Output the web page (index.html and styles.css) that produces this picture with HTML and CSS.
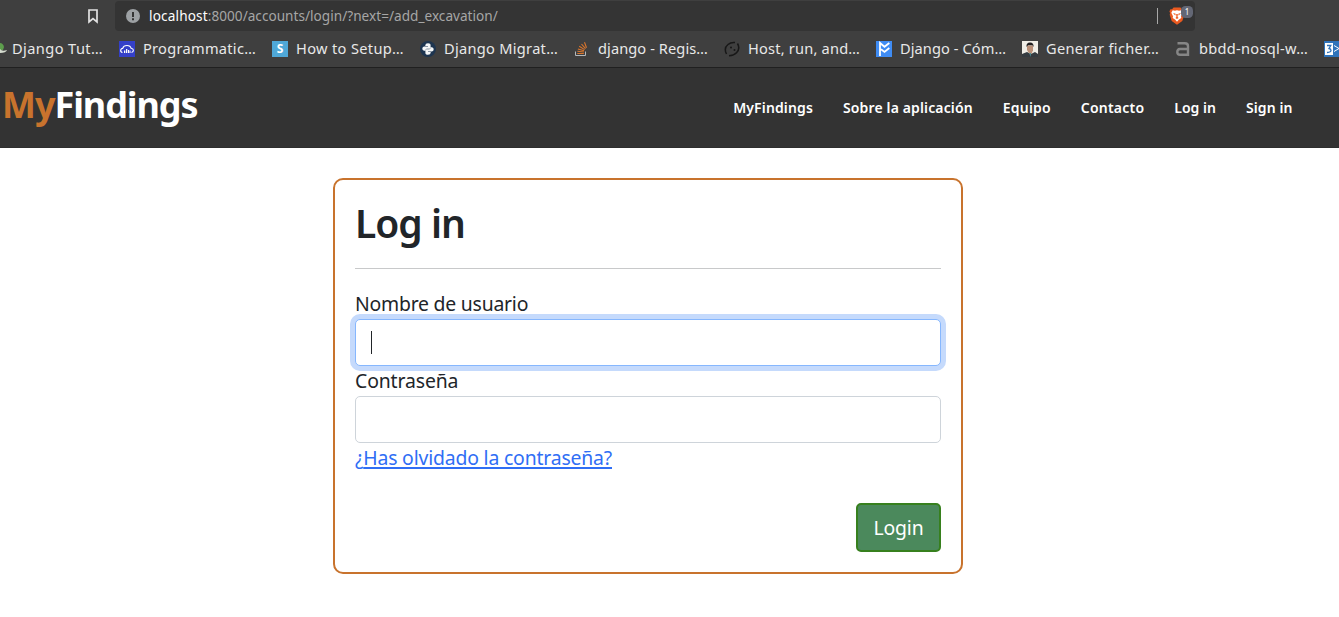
FILE: index.html
```
<!DOCTYPE html>
<html lang="es">
<head>
<meta charset="utf-8">
<title>MyFindings</title>
<link rel="stylesheet" href="styles.css">
</head>
<body>
<div class="chrome">
  <div class="toolbar">
    <svg class="save" width="12" height="16" viewBox="0 0 12 16"><path d="M2 2h8v12l-4-3.300L2 14z" fill="none" stroke="#e2e2e2" stroke-width="1.700"/></svg>
    <div class="address">
      <svg width="14" height="14" viewBox="0 0 14 14"><circle cx="7" cy="7" r="7" fill="#9da1a4"/><path d="M6 3h2v5H6zM6 9.300h2v2H6z" fill="#343434"/></svg>
      <div class="url"><span class="host">localhost</span><span class="path">:8000/accounts/login/?next=/add_excavation/</span></div>
      <span class="divider"></span>
      <div class="shield">
        <svg width="16" height="18" viewBox="0 0 16 18"><path d="M4.500.5h7l1.400 1.700 1.700.1 1 2.200-.7 1.500.4 1.700-2 6.300L8 17.700 2.700 14l-2-6.300L1.100 6 .4 4.500l1-2.200 1.700-.1z" fill="#ea5a20"/><path d="M3.700 3.200l2.300.5L8 3.200l2 .5 2.300-.5 1.400 2.600-1.700 3.400.3 1.800-2.300 1.500L8 14.800l-2-2.300L3.700 11 4 9.200 2.300 5.800z" fill="#fff"/><path d="M4 6l2.700.8-.4 1.600zM12 6l-2.700.8.4 1.600zM7.200 7h1.600L8.600 10l1 1L8 12l-1.600-1 1-1z" fill="#ea5a20"/></svg>
        <span class="badge">1</span>
      </div>
    </div>
  </div>
  <div class="bookmarks">
    <div class="bm">
      <svg width="8" height="16" viewBox="8 0 8 16"><path d="M8 2q3 0 4 4l-1 3H8z" fill="#5d9d4c"/><path d="M8 8q2 3 7 1-1 3-7 3z" fill="#d6ddd0"/></svg>
      <span class="t1">Django Tut…</span>
    </div>
    <div class="bm">
      <svg width="16" height="16" viewBox="0 0 16 16"><path fill="#3440c8" d="M0 0h16v16H0z"/><path d="M3.500 11.500Q1.400 11 1.700 9q.5-1.600 2-1.600Q4.500 4.500 8 4.500t4.200 3q2 0 2.200 1.800 0 1.800-1.900 2.200" fill="none" stroke="#fff" stroke-width="1.100"/><path d="M5 9.500h1.300V12H5zM7 8h1.300v4H7zM9 9h1v3H9zM10.500 9.500h1V12h-1z" fill="#fff"/></svg>
      <span class="t2">Programmatic…</span>
    </div>
    <div class="bm">
      <span class="tile">S</span>
      <span class="t3">How to Setup…</span>
    </div>
    <div class="bm">
      <svg width="16" height="16" viewBox="0 0 16 16"><circle cx="8" cy="8" r="8" fill="#1e3550"/><path d="M5.300 4.200Q5.300 2.200 8 2.200t2.600 2v2.500q0 1-1 1.100H6.700q-1.500 0-1.500 2H4Q2.300 9.500 2.300 7.800T4 5.500h4V5H5.300zM10.700 11.800q0 2-2.700 2t-2.600-2V9.300q0-1 1-1.100h2.900q1.500 0 1.500-2H12q1.700.3 1.700 2T12 10.500H8v.5h2.700z" fill="#f5f7f8"/></svg>
      <span class="t4">Django Migrat…</span>
    </div>
    <div class="bm">
      <svg width="16" height="16" viewBox="0 0 16 16"><path d="M1.500 10.500v4h10v-4" fill="none" stroke="#b5b8bb" stroke-width="1"/><path d="M3.300 12.500h6.500M3.400 10.300l6.400.7M3.900 8l6.200 1.700M5.200 5.300l5.400 3.300M7.500 3l4 4.700M10.500 1.200l2 5.600" stroke="#d9752c" stroke-width="1.100"/></svg>
      <span class="t5">django - Regis…</span>
    </div>
    <div class="bm">
      <svg width="16" height="16" viewBox="0 0 16 16"><path d="M2.500 13Q-.5 7 4 3.500 7 1 11 1.500M13.500 2.500q3 5-1 9.300Q10 14.500 5 14.800" fill="none" stroke="#171717" stroke-width="1.500"/><circle cx="7" cy="6.500" r="1" fill="#171717"/><circle cx="10.500" cy="9" r="1" fill="#171717"/></svg>
      <span class="t6">Host, run, and…</span>
    </div>
    <div class="bm">
      <svg width="16" height="16" viewBox="0 0 16 16"><path fill="#3f8cf4" d="M0 0h16v16H0z"/><path d="M4 15V2l4.500 3.800L13.300 2M5 8.200l3.500 2.700L13.300 7" fill="none" stroke="#fff" stroke-width="1.800"/></svg>
      <span class="t7">Django - Cóm…</span>
    </div>
    <div class="bm">
      <svg width="16" height="16" viewBox="0 0 16 16"><path fill="#f0eee7" d="M0 0h16v16H0z"/><path d="M0 16v-3l5-2 4 2 4-2 3 2v3z" fill="#353b40"/><path d="M5 4.500h6v4.700L9.500 13h-2L5 9z" fill="#b98f77"/><path d="M4.500 6Q4 1.500 8 1.500T11.500 6l-1-1.800H6z" fill="#211f20"/><path d="M7.200 12h2L8.500 16z" fill="#4e8b90"/></svg>
      <span class="t8">Generar ficher…</span>
    </div>
    <div class="bm">
      <svg width="16" height="16" viewBox="0 0 16 16"><path d="M2.500 2.200h7.300q3.200 0 3.200 3V13.800H5Q2.300 13.800 2.300 11T5 8h8" fill="none" stroke="#868686" stroke-width="2.400"/></svg>
      <span class="t9">bbdd-nosql-w…</span>
    </div>
    <div class="bm">
      <svg width="16" height="16" viewBox="0 0 16 16"><path fill="#2f73ba" d="M0 0h16v16H0z"/><path d="M1 2h8v12H1z" fill="#fff"/><path d="M3 4.500h3.800L5 7.500q2 .3 2 2T3 11.500" fill="none" stroke="#2f73ba" stroke-width="1.300"/><path d="M10 4.500l5 3-5 3" fill="none" stroke="#fff" stroke-width="1"/></svg>
    </div>
  </div>
</div>
<header class="site">
  <div class="brand"><span class="my">My</span><span class="findings">Findings</span></div>
  <nav>
    <a class="n1">MyFindings</a><a class="n2">Sobre la aplicación</a><a class="n3">Equipo</a><a class="n4">Contacto</a><a class="n5">Log in</a><a class="n6">Sign in</a>
  </nav>
</header>
<main>
  <form class="card">
    <h1>Log in</h1>
    <label>Nombre de usuario</label>
    <div class="field focused"><span class="caret"></span></div>
    <label class="pass">Contraseña</label>
    <div class="field"></div>
    <div class="forgot"><span>¿</span><a>Has olvidado la contraseña?</a></div>
    <div class="actions"><button type="button">Login</button></div>
  </form>
</main>
</body>
</html>
```
FILE: styles.css
```
* { box-sizing: border-box; }
body { margin: 0; background: #fff; color: #212529; font-family: "Noto Sans", sans-serif; overflow: hidden; }
svg { display: block; flex: none; }

.chrome { height: 68px; background: #3f3f3f; border-bottom: 1px solid #202020; }
.toolbar { display: flex; align-items: flex-start; height: 31px; padding: 1px 0 0 87px; }
.save { margin-top: 7px; }
.address { display: flex; align-items: center; width: 1080px; height: 30px; margin-left: 16px; padding-left: 11px; background: #343434; border-radius: 4px; }
.url { flex: 1; margin-left: 9px; font-size: 13.6px; line-height: 30px; color: #a6a6a6; white-space: nowrap; }
.host { color: #fff; letter-spacing: .15px; }
.path { letter-spacing: .02px; }
.divider { width: 1px; height: 16px; background: #a8a8a8; }
.shield { position: relative; width: 37px; padding-left: 11px; }
.badge { position: absolute; left: 23px; top: -1px; width: 12px; height: 12px; border-radius: 4.5px; background: #636775; color: #fff; font-size: 8px; line-height: 12px; text-align: center; }

.bookmarks { display: flex; gap: 16px; height: 36px; padding-top: 10px; overflow: hidden; }
.bm { display: flex; flex: none; gap: 8px; height: 16px; color: #e8e8e8; font-size: 14.6px; line-height: 14px; white-space: nowrap; }
.bm:first-child { gap: 4px; }
.tile { width: 16px; height: 16px; background: #4fa8d8; color: #fff; font-size: 12px; font-weight: 700; line-height: 16px; text-align: center; }
.t1 { width: 91px; letter-spacing: .41px; }
.t2 { width: 113px; letter-spacing: .28px; }
.t3 { width: 108px; letter-spacing: .34px; }
.t4 { width: 114px; letter-spacing: .29px; }
.t5 { width: 110px; letter-spacing: .09px; }
.t6 { width: 112px; letter-spacing: .2px; }
.t7 { width: 106px; letter-spacing: .08px; }
.t8 { width: 113px; letter-spacing: .33px; }
.t9 { width: 109px; letter-spacing: .28px; }

.site { display: flex; justify-content: space-between; height: 80px; padding: 0 46.5px 0 2px; background: #333; border-bottom: 1px solid #2e2e2e; }
.brand { font-size: 36px; font-weight: 700; line-height: 74px; color: #fff; white-space: nowrap; }
.my { color: #c8732d; letter-spacing: -1px; }
.findings { letter-spacing: -1.1px; }
nav { display: flex; gap: 30px; color: #fff; font-size: 14px; font-weight: 600; line-height: 79px; white-space: nowrap; }
.n1 { letter-spacing: .14px; }
.n2 { letter-spacing: .14px; }
.n3 { letter-spacing: .18px; }
.n4 { letter-spacing: .22px; }
.n5 { letter-spacing: .03px; }
.n6 { letter-spacing: .08px; }

main { padding: 30px 0 0 333px; }
.card { width: 630px; height: 396px; padding: 20px; border: 2px solid #c8732d; border-radius: 10px; font-size: 19.4px; }
h1 { height: 69px; margin: 0 0 20px; border-bottom: 1px solid #c8c9ca; font-size: 39px; font-weight: 600; line-height: 46px; letter-spacing: -1px; }
label { display: block; height: 30px; line-height: 30px; letter-spacing: -.22px; }
.pass { letter-spacing: -.12px; }
.field { height: 47px; padding: 11px 15px; border: 1px solid #ced4da; border-radius: 5px; background: #fff; }
.focused { border-color: #86b7fe; box-shadow: 0 0 0 5px #c5dafc; }
.caret { display: block; width: 1px; height: 23px; background: #212529; }
.forgot { height: 30px; line-height: 30px; color: #2f6ef5; letter-spacing: -.18px; }
.forgot a { text-decoration: underline 2px; text-underline-offset: 2px; text-decoration-skip-ink: none; }
.actions { display: flex; justify-content: flex-end; padding-top: 30px; }
button { width: 85px; height: 49px; padding: 0; border: 2px solid #37801e; border-radius: 5px; background: #4b895c; color: #fff; font: 19.4px "Noto Sans", sans-serif; letter-spacing: -.15px; }
```
